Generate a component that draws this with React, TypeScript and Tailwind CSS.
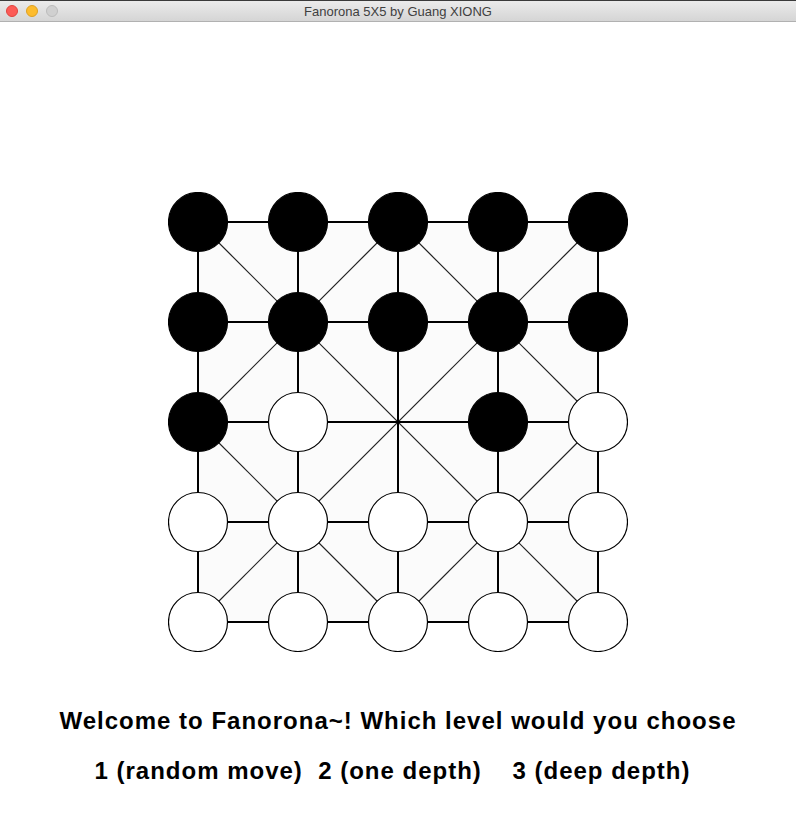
import React from "react";

const board = [
  "BBBBB",
  "BBBBB",
  "BW.BW",
  "WWWWW",
  "WWWWW",
];

const gap = 100;
const pad = 30;
const pos = (i: number) => pad + i * gap;

// diagonals of the 5x5 fanorona board
const diagonals: [number, number, number, number][] = [
  [0, 0, 4, 4],
  [4, 0, 0, 4],
  [2, 0, 0, 2],
  [2, 0, 4, 2],
  [0, 2, 2, 4],
  [4, 2, 2, 4],
];

const Board = () => {
  const size = pad * 2 + gap * 4;
  return (
    <svg width={size} height={size} viewBox={`0 0 ${size} ${size}`}>
      <rect x={pos(0)} y={pos(0)} width={gap * 4} height={gap * 4} fill="#fbfbfb" />
      {diagonals.map(([c1, r1, c2, r2], i) => (
        <line key={"d" + i} x1={pos(c1)} y1={pos(r1)} x2={pos(c2)} y2={pos(r2)} stroke="#222" strokeWidth={1.2} />
      ))}
      {[0, 1, 2, 3, 4].map((i) => (
        <g key={"l" + i}>
          <line x1={pos(0)} y1={pos(i)} x2={pos(4)} y2={pos(i)} stroke="#000" strokeWidth={2} />
          <line x1={pos(i)} y1={pos(0)} x2={pos(i)} y2={pos(4)} stroke="#000" strokeWidth={2} />
        </g>
      ))}
      {board.map((row, r) =>
        row.split("").map((cell, c) =>
          cell === "." ? null : (
            <circle
              key={r + "-" + c}
              cx={pos(c)}
              cy={pos(r)}
              r={29.5}
              fill={cell === "B" ? "#000" : "#fff"}
              stroke="#000"
              strokeWidth={1.2}
            />
          )
        )
      )}
    </svg>
  );
};

const App = () => {
  return (
    <div className="w-[796px] h-[818px] bg-white flex flex-col overflow-hidden">
      <div className="h-[22px] shrink-0 relative flex items-center justify-center bg-gradient-to-b from-[#ebebeb] to-[#d5d5d5] border-b border-[#b1b1b1] border-t border-t-[#3a3a3a]">
        <div className="absolute left-[6px] top-[4px] flex gap-[8px]">
          <span className="w-[12px] h-[12px] rounded-full bg-[#fc5b57] border border-[#e0443e]" />
          <span className="w-[12px] h-[12px] rounded-full bg-[#fdbc2e] border border-[#dea123]" />
          <span className="w-[12px] h-[12px] rounded-full bg-[#d0d0d0] border border-[#bcbcbc]" />
        </div>
        <span className="text-[13px] text-[#3f3f3f] font-['Liberation_Sans',sans-serif] leading-none">
          Fanorona 5X5 by Guang XIONG
        </span>
      </div>
      <div className="flex flex-col items-center pt-[170px]">
        <Board />
        <div className="mt-[55px] font-['Liberation_Sans',sans-serif] font-bold text-[24px] leading-[28px] tracking-[1px] text-black text-center">
          Welcome to Fanorona~! Which level would you choose
        </div>
        <div className="mt-[22px] pr-[11px] font-['Liberation_Sans',sans-serif] font-bold text-[24px] leading-[28px] tracking-[1px] text-black whitespace-pre">
          {"1 (random move)  2 (one depth)    3 (deep depth)"}
        </div>
      </div>
    </div>
  );
};

export default App;
